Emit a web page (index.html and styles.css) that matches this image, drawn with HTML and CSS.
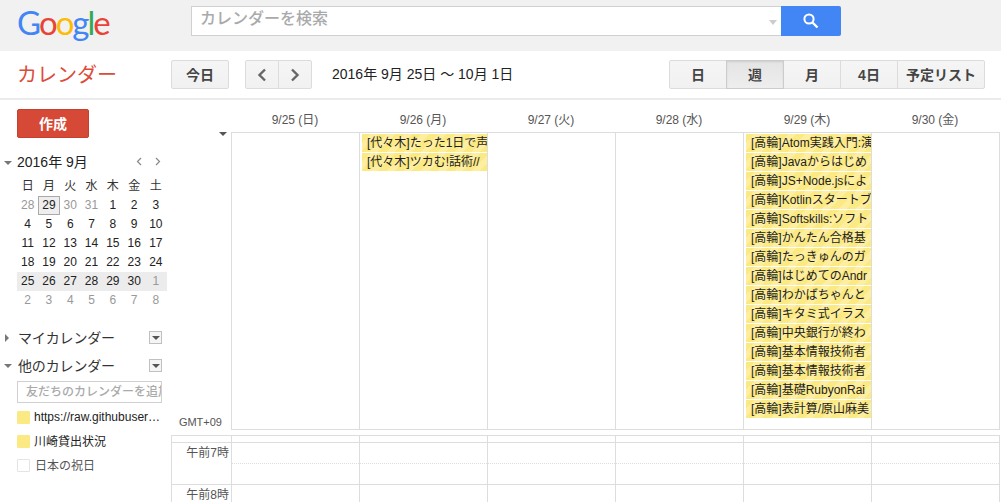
FILE: index.html
```html
<!DOCTYPE html>
<html lang="ja">
<head>
<meta charset="utf-8">
<title>カレンダー</title>
<link rel="stylesheet" href="styles.css">
</head>
<body>
<header class="topbar">
  <div class="logo"><span class="lb">G</span><span class="lr">o</span><span class="ly">o</span><span class="lb">g</span><span class="lg">l</span><span class="lr">e</span></div>
  <div class="search">
    <div class="search-box"><span class="search-text">カレンダーを検索</span><span class="search-caret"></span></div>
    <button class="search-btn"><svg width="18" height="18" viewBox="0 0 18 18"><circle cx="7" cy="7" r="4.6" fill="none" stroke="#fff" stroke-width="2"/><path d="M10.5 10.5L15.5 15.5" stroke="#fff" stroke-width="2.4" fill="none"/></svg></button>
  </div>
</header>
<div class="toolbar">
  <div class="brand">カレンダー</div>
  <button class="btn label today">今日</button>
  <div class="group nav">
    <button class="btn seg navbtn"><svg width="10" height="14" viewBox="0 0 10 14"><path d="M8 1.5L2.5 7L8 12.5" fill="none" stroke="#666" stroke-width="2.4"/></svg></button>
    <button class="btn seg navbtn"><svg width="10" height="14" viewBox="0 0 10 14"><path d="M2 1.5L7.5 7L2 12.5" fill="none" stroke="#666" stroke-width="2.4"/></svg></button>
  </div>
  <div class="range">2016年 9月 25日 〜 10月 1日</div>
  <div class="group views">
    <button class="btn label seg v57">日</button>
    <button class="btn label seg v57 active">週</button>
    <button class="btn label seg v57">月</button>
    <button class="btn label seg v57">4日</button>
    <button class="btn label seg v87">予定リスト</button>
  </div>
</div>
<main class="main">
  <aside class="sidebar">
    <button class="create">作成</button>
    <div class="mini-head">
      <span class="tri down"></span><span class="mini-title">2016年 9月</span>
      <span class="mini-nav"><svg width="7" height="9" viewBox="0 0 7 9"><path d="M5 1L1.5 4.5L5 8" fill="none" stroke="#888" stroke-width="1.2"/></svg><svg width="7" height="9" viewBox="0 0 7 9"><path d="M2 1L5.5 4.5L2 8" fill="none" stroke="#888" stroke-width="1.2"/></svg></span>
    </div>
    <div class="mini-grid">
      <div class="dow">日</div><div class="dow">月</div><div class="dow">火</div><div class="dow">水</div><div class="dow">木</div><div class="dow">金</div><div class="dow">土</div>
      <div class="d off">28</div><div class="d now">29</div><div class="d off">30</div><div class="d off">31</div><div class="d">1</div><div class="d">2</div><div class="d">3</div>
      <div class="d">4</div><div class="d">5</div><div class="d">6</div><div class="d">7</div><div class="d">8</div><div class="d">9</div><div class="d">10</div>
      <div class="d">11</div><div class="d">12</div><div class="d">13</div><div class="d">14</div><div class="d">15</div><div class="d">16</div><div class="d">17</div>
      <div class="d">18</div><div class="d">19</div><div class="d">20</div><div class="d">21</div><div class="d">22</div><div class="d">23</div><div class="d">24</div>
      <div class="d wk">25</div><div class="d wk">26</div><div class="d wk">27</div><div class="d wk">28</div><div class="d wk">29</div><div class="d wk">30</div><div class="d wk off">1</div>
      <div class="d off">2</div><div class="d off">3</div><div class="d off">4</div><div class="d off">5</div><div class="d off">6</div><div class="d off">7</div><div class="d off">8</div>
    </div>
    <div class="sec sec-my"><span class="tri right"></span><span class="sec-title">マイカレンダー</span><span class="menu"><span class="tri down dark"></span></span></div>
    <div class="sec sec-other"><span class="tri down"></span><span class="sec-title">他のカレンダー</span><span class="menu"><span class="tri down dark"></span></span></div>
    <div class="add">友だちのカレンダーを追加</div>
    <ul class="cals">
      <li><span class="sw on"></span><span class="cal-name">https://raw.githubuser…</span></li>
      <li><span class="sw on"></span><span class="cal-name">川崎貸出状況</span></li>
      <li><span class="sw"></span><span class="cal-name muted">日本の祝日</span></li>
    </ul>
  </aside>
  <section class="cal">
    <div class="days">
      <div class="gutter"></div>
      <div class="day">9/25 (日)</div><div class="day">9/26 (月)</div><div class="day">9/27 (火)</div><div class="day">9/28 (水)</div><div class="day">9/29 (木)</div><div class="day">9/30 (金)</div>
    </div>
    <div class="allday">
      <div class="gutter gmt"><span class="tri down dark corner"></span>GMT+09</div>
      <div class="col"></div>
      <div class="col">
        <div class="ev">[代々木]たった1日で声</div>
        <div class="ev">[代々木]ツカむ!話術//</div>
      </div>
      <div class="col"></div>
      <div class="col"></div>
      <div class="col">
        <div class="ev">[高輪]Atom実践入門:演</div>
        <div class="ev">[高輪]Javaからはじめ</div>
        <div class="ev">[高輪]JS+Node.jsによ</div>
        <div class="ev">[高輪]Kotlinスタートブ</div>
        <div class="ev">[高輪]Softskills:ソフト</div>
        <div class="ev">[高輪]かんたん合格基</div>
        <div class="ev">[高輪]たっきゅんのガ</div>
        <div class="ev">[高輪]はじめてのAndr</div>
        <div class="ev">[高輪]わかばちゃんと</div>
        <div class="ev">[高輪]キタミ式イラス</div>
        <div class="ev">[高輪]中央銀行が終わ</div>
        <div class="ev">[高輪]基本情報技術者</div>
        <div class="ev">[高輪]基本情報技術者</div>
        <div class="ev">[高輪]基礎RubyonRai</div>
        <div class="ev">[高輪]表計算/原山麻美</div>
      </div>
      <div class="col"></div>
    </div>
    <div class="times">
      <div class="t-row t-head"><div class="hour"></div><div class="tc"></div><div class="tc"></div><div class="tc"></div><div class="tc"></div><div class="tc"></div><div class="tc"></div></div>
      <div class="t-row"><div class="hour">午前7時</div><div class="tc half"></div><div class="tc half"></div><div class="tc half"></div><div class="tc half"></div><div class="tc half"></div><div class="tc half"></div></div>
      <div class="t-row"><div class="hour">午前8時</div><div class="tc half"></div><div class="tc half"></div><div class="tc half"></div><div class="tc half"></div><div class="tc half"></div><div class="tc half"></div></div>
    </div>
  </section>
</main>
</body>
</html>
```
FILE: styles.css
```css
* { box-sizing: border-box; }
html, body { margin: 0; height: 502px; overflow: hidden; background: #fff; }
body { font-family: "Liberation Sans", "Noto Sans CJK JP", sans-serif; font-size: 12px; color: #222; }
button { font-family: inherit; margin: 0; padding: 0; cursor: default; }

/* top bar */
.topbar { height: 51px; background: #f1f1f1; display: flex; }
.logo { flex: none; width: 191px; height: 46px; padding-left: 17px; font-family: "Lato", sans-serif; font-size: 33px; line-height: 44px; letter-spacing: -2px; }
.lb { color: #4285f4; } .lr { color: #ea4335; } .ly { color: #fbbc05; } .lg { color: #34a853; }
.search { display: flex; height: 30px; margin-top: 6px; }
.search-box { width: 590px; background: #fff; border: 1px solid #d0d0d0; border-right: 0; display: flex; align-items: center; justify-content: space-between; padding: 0 4px 0 8px; }
.search-text { font-size: 16px; font-weight: 500; color: #aaa; line-height: 24px; margin-top: -4px; }
.search-caret { width: 0; height: 0; border: 4px solid transparent; border-top: 5px solid #ccc; border-bottom: 0; margin-top: 3px; }
.search-btn { width: 60px; background: #4285f4; border: 0; border-radius: 0 2px 2px 0; display: flex; align-items: center; justify-content: center; }

/* toolbar */
.toolbar { height: 49px; border-bottom: 2px solid #ebebeb; display: flex; align-items: flex-start; padding-top: 9px; }
.brand { width: 171px; padding-left: 17px; font-size: 20px; line-height: 30px; color: #dd4b39; }
.btn { height: 29px; background: linear-gradient(#f5f5f5, #f1f1f1); border: 1px solid #dcdcdc; border-radius: 2px; font-size: 14px; font-weight: 700; color: #444; display: flex; align-items: center; justify-content: center; }
.btn.label { padding-bottom: 2px; }
.today { width: 58px; }
.group { display: flex; }
.nav { margin-left: 16px; }
.seg { border-radius: 0; margin-left: -1px; }
.seg:first-child { margin-left: 0; border-radius: 2px 0 0 2px; }
.seg:last-child { border-radius: 0 2px 2px 0; }
.navbtn { width: 34px; }
.range { margin-left: 20px; width: 337px; font-size: 14px; line-height: 29px; color: #222; }
.v57 { width: 58px; }
.v87 { width: 88px; }
.active { background: linear-gradient(#e4e4e4, #eeeeee); border-color: #ccc; box-shadow: inset 0 1px 2px rgba(0,0,0,.1); position: relative; }

/* main */
.main { display: flex; }
.sidebar { width: 171px; flex: none; padding-left: 17px; }
.create { display: block; margin-top: 9px; width: 72px; height: 29px; padding-bottom: 2px; background: #d64937; border: 1px solid #c5402f; border-radius: 2px; font-size: 14px; font-weight: 700; color: #fff; }

.tri { display: inline-block; width: 0; height: 0; }
.tri.down { border-left: 4px solid transparent; border-right: 4px solid transparent; border-top: 4px solid #777; }
.tri.right { border-top: 4px solid transparent; border-bottom: 4px solid transparent; border-left: 4px solid #777; }
.tri.dark { border-top-color: #555; }

.mini-head { position: relative; margin-top: 14px; height: 20px; display: flex; align-items: center; font-size: 14px; line-height: 20px; }
.mini-head > .tri { position: absolute; left: -13px; top: 9px; }
.mini-title { color: #222; }
.mini-nav { position: absolute; left: 119px; top: 5px; width: 25px; display: flex; justify-content: space-between; }
.mini-grid { width: 150px; display: grid; grid-template-columns: repeat(6, 21.3px) 22.2px; grid-auto-rows: 19px; margin-top: 5px; }
.dow, .d { text-align: center; line-height: 19px; font-size: 12px; color: #222; }
.dow { color: #333; }
.d.off { color: #999; }
.d.wk { background: #ececec; }
.d.now { background: #eee; border: 1px solid #aaa; line-height: 17px; }

.sec { position: relative; height: 20px; display: flex; align-items: center; font-size: 14px; line-height: 20px; letter-spacing: -0.15px; padding-left: 1px; }
.sec > .tri { position: absolute; left: -12px; }
.sec > .tri.down { left: -13px; }
.sec-my { margin-top: 18px; }
.sec-other { margin-top: 8px; }
.sec-title { color: #333; }
.menu { position: absolute; left: 132px; top: 3px; width: 13px; height: 13px; border: 1px solid #c0c0c0; background: #f5f5f5; display: flex; align-items: center; justify-content: center; }
.add { width: 145px; height: 22px; margin-top: 5px; border: 1px solid #d0d0d0; padding-left: 8px; font-size: 12px; line-height: 20px; color: #aaa; font-weight: 500; white-space: nowrap; overflow: hidden; }
.cals { list-style: none; margin: 2px 0 0; padding: 0; width: 150px; }
.cals li { height: 24px; display: flex; align-items: center; }
.sw { flex: none; width: 13px; height: 13px; margin-right: 4px; border: 1px solid #e4e4e4; background: #fff; border-radius: 1px; }
.sw.on { background: #fbe983; border-color: #fbe983; }
.cal-name { font-size: 12px; white-space: nowrap; color: #222; margin-top: -1px; }
.cal-name.muted { color: #555; margin-left: 1px; }

/* calendar */
.cal { width: 830px; flex: none; }
.days { display: grid; grid-template-columns: 60px repeat(6, 128px); height: 32px; }
.day { text-align: center; font-size: 12px; line-height: 41px; color: #555; }
.allday { display: grid; grid-template-columns: 60px repeat(5, 128px) 129px; height: 298px; }
.col { border: 1px solid #ddd; border-width: 1px 0 1px 1px; padding: 1px 0 0 2px; min-width: 0; }
.col:last-child { border-right: 1px solid #ddd; }
.gutter { position: relative; }
.gmt { font-size: 11px; color: #555; text-align: right; padding-right: 9px; padding-top: 282px; line-height: 16px; }
.corner { position: absolute; top: 0; right: 4px; }
.ev { height: 18px; margin-bottom: 1px; padding-left: 5px; font-size: 12px; line-height: 19px; color: #1d1d1d; white-space: nowrap; overflow: hidden;
  background: repeating-linear-gradient(135deg, #fbe983 0 6px, #fdeea0 6px 12px); }

.times { margin-top: 5px; width: 829px; border-top: 1px solid #ddd; }
.t-row { display: grid; grid-template-columns: 60px repeat(5, 128px) 129px; height: 42px; border-bottom: 1px solid #ddd; }
.t-head { height: 7px; }
.hour { border-left: 1px solid #ddd; text-align: right; padding-right: 2px; font-size: 12px; line-height: 20px; color: #555; }
.tc { border-left: 1px solid #ddd; }
.tc:last-child { border-right: 1px solid #ddd; }
.half { position: relative; }
.half::after { content: ""; position: absolute; left: 0; right: 0; top: 20px; border-top: 1px dotted #ddd; }
```
